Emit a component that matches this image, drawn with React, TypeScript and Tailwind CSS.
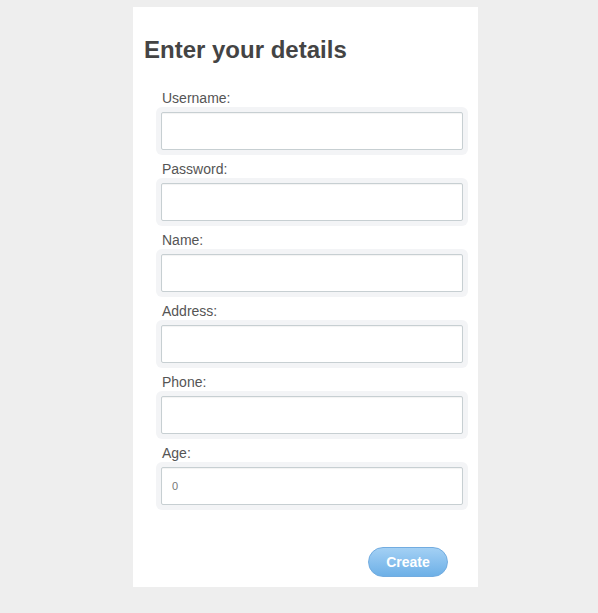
import React from "react";

const fields = ["Username:", "Password:", "Name:", "Address:", "Phone:", "Age:"];

export default function App() {
  return (
    <div className="min-h-[613px] w-full bg-[#eeeeee] pt-[7px] font-['Liberation_Sans',Arial,sans-serif]">
      <div className="ml-[133px] w-[345px] bg-white px-[11px] pt-[29px] pb-[10px]">
        <h1 className="text-[24px] font-bold leading-[28px] text-[#444444]">Enter your details</h1>
        <div className="mt-[26px] flex flex-col pl-[12px]">
          {fields.map((f, i) => (
            <div key={f} className="flex flex-col">
              <label className="pl-[6px] text-[14px] leading-[17px] text-[#555555]">{f}</label>
              <div className="mb-[6px] w-[312px] rounded-[6px] bg-[#f3f4f6] p-[5px]">
                <div className="flex h-[38px] w-[302px] items-center rounded-[2px] border border-[#c7cfd2] bg-white pl-[10px] text-[11px] text-[#777777] shadow-[inset_0_1px_1px_rgba(0,0,0,0.05)]">
                  {i === 5 ? "0" : ""}
                </div>
              </div>
            </div>
          ))}
        </div>
        <div className="mt-[31px] flex justify-end pr-[19px]">
          <button className="h-[30px] w-[80px] rounded-full border border-[#72ace0] bg-gradient-to-b from-[#a3d0f4] to-[#6db0e7] text-[14px] font-bold text-white">
            Create
          </button>
        </div>
      </div>
    </div>
  );
}
